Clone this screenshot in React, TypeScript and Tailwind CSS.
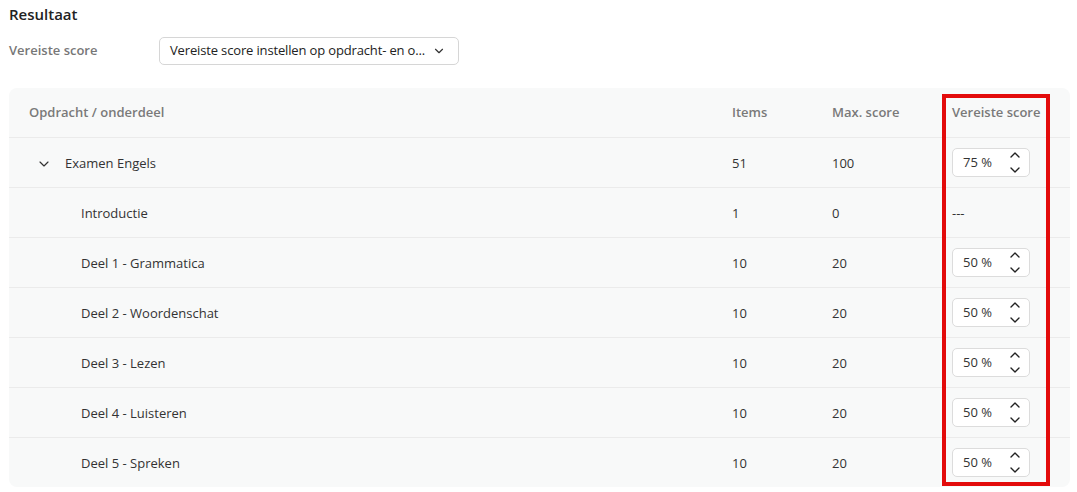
import { ChevronDown, ChevronUp } from 'lucide-react'

type Row = { name: string; items: number; max: number; score: string | null; parent?: boolean }

const rows: Row[] = [
  { name: 'Examen Engels', items: 51, max: 100, score: '75', parent: true },
  { name: 'Introductie', items: 1, max: 0, score: null },
  { name: 'Deel 1 - Grammatica', items: 10, max: 20, score: '50' },
  { name: 'Deel 2 - Woordenschat', items: 10, max: 20, score: '50' },
  { name: 'Deel 3 - Lezen', items: 10, max: 20, score: '50' },
  { name: 'Deel 4 - Luisteren', items: 10, max: 20, score: '50' },
  { name: 'Deel 5 - Spreken', items: 10, max: 20, score: '50' },
]

function ScoreInput({ value }: { value: string }) {
  return (
    <div className="flex h-[29px] w-[78px] items-center justify-between rounded-[5px] border border-[#dcdcdc] bg-white pl-[10px] pr-[6px]">
      <span className="text-[#333]">{value} %</span>
      <span className="flex flex-col items-center leading-none text-[#222]">
        <ChevronUp className="h-[16px] w-[16px]" strokeWidth={2} />
        <ChevronDown className="-mt-[1px] h-[16px] w-[16px]" strokeWidth={2} />
      </span>
    </div>
  )
}

export default function App() {
  return (
    <div className="min-h-screen bg-white pl-[9px] pr-[7px] pt-[3px] font-['Open_Sans',sans-serif] text-[13px] text-[#333]">
      <h2 className="text-[15px] font-semibold leading-[22px] text-[#222]">Resultaat</h2>

      <div className="mt-[12px] flex items-center">
        <span className="w-[150px] font-semibold text-[#777]">Vereiste score</span>
        <div className="flex h-[28px] w-[300px] items-center justify-between rounded-[5px] border border-[#d6d6d6] bg-white pl-[10px] pr-[12px]">
          <span className="whitespace-nowrap tracking-[-0.15px] text-[#222]">Vereiste score instellen op opdracht- en o...</span>
          <ChevronDown className="h-[14px] w-[14px] shrink-0 text-[#333]" strokeWidth={2} />
        </div>
      </div>

      <div className="relative mt-[23px] rounded-[8px] bg-[#f8f9f9]">
        <div className="grid h-[49px] grid-cols-[703px_100px_120px_1fr] items-center pl-[20px] pt-[1px] font-semibold text-[#7a7a7a]">
          <span>Opdracht / onderdeel</span>
          <span>Items</span>
          <span>Max. score</span>
          <span>Vereiste score</span>
        </div>
        {rows.map((r) => (
          <div
            key={r.name}
            className="grid h-[50px] grid-cols-[703px_100px_120px_1fr] items-center border-t border-[#ebebeb] pl-[20px] pt-[2px]"
          >
            {r.parent ? (
              <span className="flex items-center">
                <ChevronDown className="ml-[7px] mr-[13px] h-[16px] w-[16px] text-[#333]" strokeWidth={1.75} />
                Examen Engels
              </span>
            ) : (
              <span className="pl-[52px]">{r.name}</span>
            )}
            <span>{r.items}</span>
            <span>{r.max}</span>
            <span className="-mt-[2px]">{r.score ? <ScoreInput value={r.score} /> : <span className="block pt-[2px]">---</span>}</span>
          </div>
        ))}

        <div className="pointer-events-none absolute left-[933px] top-[6px] h-[392px] w-[108px] border-[4px] border-[#e30b0b]" />
      </div>
    </div>
  )
}
